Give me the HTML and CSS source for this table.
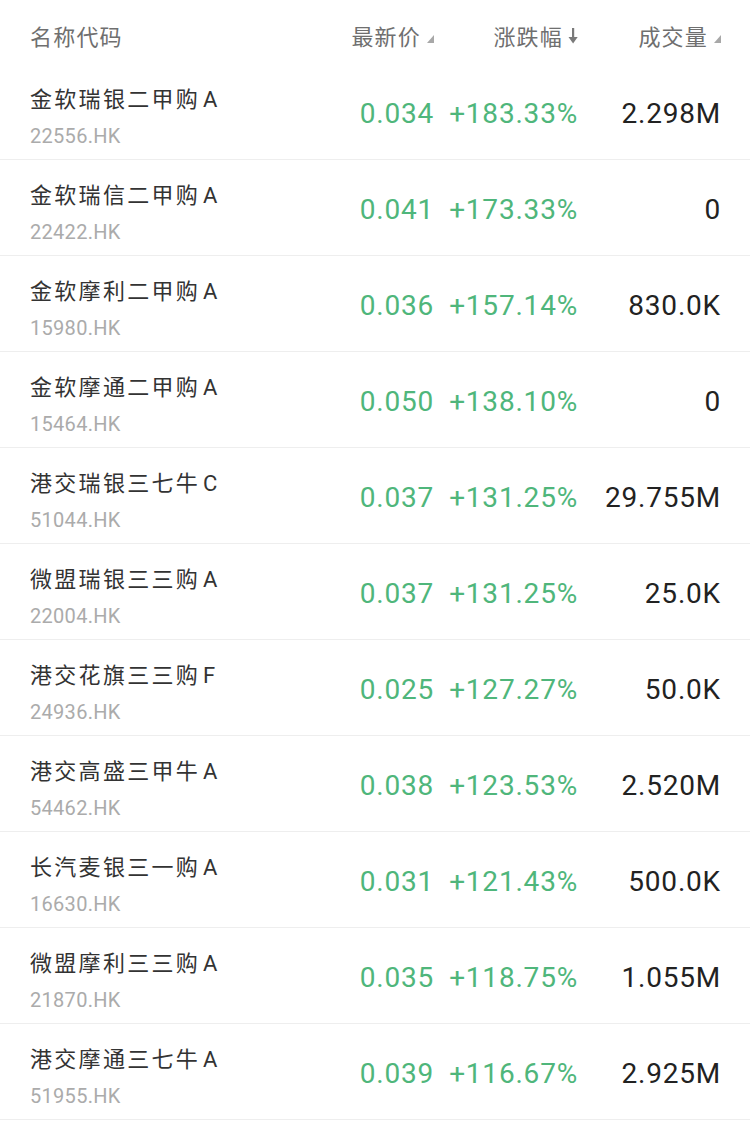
FILE: index.html
```html
<!DOCTYPE html>
<html lang="zh-CN">
<head>
<meta charset="utf-8">
<link rel="stylesheet" href="styles.css">
</head>
<body>
<div class="table">
  <div class="head">
    <div class="h-name">名称代码</div>
    <div class="h-col">最新价<span class="tri"></span></div>
    <div class="h-col">涨跌幅<svg class="arrow" width="10" height="16" viewBox="0 0 10 16"><rect x="4" y="0" width="2.2" height="11" fill="#7a7a7a"/><path d="M0.5 9 L9.7 9 L5.1 15.5 Z" fill="#7a7a7a"/></svg></div>
    <div class="h-col">成交量<span class="tri"></span></div>
  </div>

  <div class="row"><div class="name"><div class="title">金软瑞银二甲购<span class="suf">A</span></div><div class="code">22556.HK</div></div><div class="num up">0.034</div><div class="num up">+183.33%</div><div class="num vol">2.298M</div></div>
  <div class="row"><div class="name"><div class="title">金软瑞信二甲购<span class="suf">A</span></div><div class="code">22422.HK</div></div><div class="num up">0.041</div><div class="num up">+173.33%</div><div class="num vol">0</div></div>
  <div class="row"><div class="name"><div class="title">金软摩利二甲购<span class="suf">A</span></div><div class="code">15980.HK</div></div><div class="num up">0.036</div><div class="num up">+157.14%</div><div class="num vol">830.0K</div></div>
  <div class="row"><div class="name"><div class="title">金软摩通二甲购<span class="suf">A</span></div><div class="code">15464.HK</div></div><div class="num up">0.050</div><div class="num up">+138.10%</div><div class="num vol">0</div></div>
  <div class="row"><div class="name"><div class="title">港交瑞银三七牛<span class="suf">C</span></div><div class="code">51044.HK</div></div><div class="num up">0.037</div><div class="num up">+131.25%</div><div class="num vol">29.755M</div></div>
  <div class="row"><div class="name"><div class="title">微盟瑞银三三购<span class="suf">A</span></div><div class="code">22004.HK</div></div><div class="num up">0.037</div><div class="num up">+131.25%</div><div class="num vol">25.0K</div></div>
  <div class="row"><div class="name"><div class="title">港交花旗三三购<span class="suf">F</span></div><div class="code">24936.HK</div></div><div class="num up">0.025</div><div class="num up">+127.27%</div><div class="num vol">50.0K</div></div>
  <div class="row"><div class="name"><div class="title">港交高盛三甲牛<span class="suf">A</span></div><div class="code">54462.HK</div></div><div class="num up">0.038</div><div class="num up">+123.53%</div><div class="num vol">2.520M</div></div>
  <div class="row"><div class="name"><div class="title">长汽麦银三一购<span class="suf">A</span></div><div class="code">16630.HK</div></div><div class="num up">0.031</div><div class="num up">+121.43%</div><div class="num vol">500.0K</div></div>
  <div class="row"><div class="name"><div class="title">微盟摩利三三购<span class="suf">A</span></div><div class="code">21870.HK</div></div><div class="num up">0.035</div><div class="num up">+118.75%</div><div class="num vol">1.055M</div></div>
  <div class="row"><div class="name"><div class="title">港交摩通三七牛<span class="suf">A</span></div><div class="code">51955.HK</div></div><div class="num up">0.039</div><div class="num up">+116.67%</div><div class="num vol">2.925M</div></div>
</div>
</body>
</html>
```
FILE: styles.css
```css
html, body {
  margin: 0;
  padding: 0;
  background: #ffffff;
}
body {
  font-family: Roboto, "Noto Sans CJK SC", sans-serif;
  width: 750px;
  height: 1121px;
  overflow: hidden;
}
.table {
  display: flex;
  flex-direction: column;
}
.head,
.row {
  display: grid;
  grid-template-columns: 1fr 110px 144px 143px;
  padding: 0 29px 0 30px;
}
.head {
  height: 64px;
  align-items: center;
  padding-top: 5px;
  box-sizing: border-box;
  font-family: "Noto Sans CJK SC", sans-serif;
  font-size: 22px;
  color: #6f6f6f;
  letter-spacing: 1.2px;
}
.h-col {
  display: flex;
  justify-content: flex-end;
  align-items: center;
}
.tri {
  width: 0;
  height: 0;
  border-style: solid;
  border-width: 0 0 8px 7px;
  border-color: transparent transparent #a8a8a8 transparent;
  margin-left: 6px;
  margin-top: 9px;
}
.arrow {
  margin-left: 5px;
  margin-top: 2px;
}
.row {
  height: 96px;
  box-sizing: border-box;
  border-bottom: 1px solid #eeeeee;
  align-items: center;
}
.name {
  align-self: stretch;
  display: flex;
  flex-direction: column;
  padding-top: 18px;
  gap: 7px;
}
.title {
  font-family: "Noto Sans CJK SC", sans-serif;
  font-size: 22px;
  line-height: 30px;
  color: #333333;
  letter-spacing: 2.3px;
}
.suf {
  font-family: Roboto, sans-serif;
  margin-left: 3px;
}
.code {
  font-size: 20px;
  line-height: 28px;
  color: #ababab;
  letter-spacing: 0.3px;
}
.num {
  text-align: right;
  font-size: 28px;
  line-height: 34px;
  font-weight: 450;
  letter-spacing: 0.8px;
  padding-top: 5px;
}
.up {
  color: #4fb67b;
}
.vol {
  color: #222222;
}
```
